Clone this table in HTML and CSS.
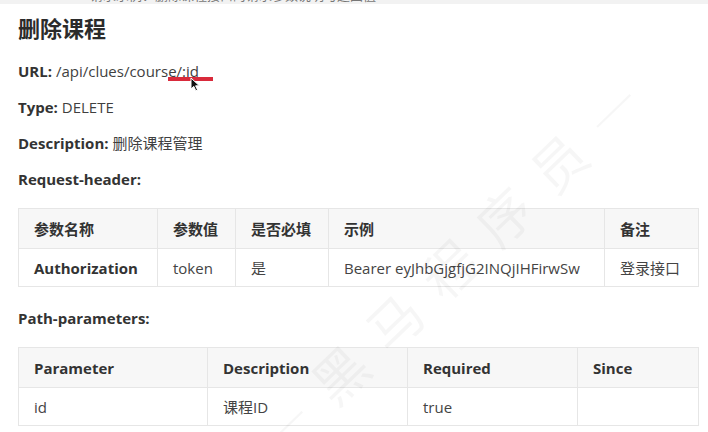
FILE: index.html
```html
<!DOCTYPE html>
<html lang="zh-CN">
<head>
<meta charset="utf-8">
<title>删除课程</title>
<link rel="stylesheet" href="styles.css">
</head>
<body>
<div class="topcut"><div class="topcut-text">请求示例：删除课程接口的请求参数说明与返回值</div></div>
<main class="page">
  <h1 class="title">删除课程</h1>
  <p class="field"><b>URL:</b> /api/clues/cours<span class="mark">e/:id<span class="redline"></span><svg class="cursor" width="11" height="15" viewBox="0 0 11 15"><path d="M1 1 L1 12 L3.8 9.4 L5.8 13.8 L7.6 13 L5.6 8.8 L9.4 8.8 Z" fill="#111" stroke="#fff" stroke-width="1"/></svg></span></p>
  <p class="field"><b>Type:</b> DELETE</p>
  <p class="field"><b>Description:</b> 删除课程管理</p>
  <p class="field"><b>Request-header:</b></p>
  <table class="grid grid-header">
    <colgroup>
      <col style="width:139px"><col style="width:78px"><col style="width:93px"><col style="width:276px"><col style="width:94px">
    </colgroup>
    <thead>
      <tr><th>参数名称</th><th>参数值</th><th>是否必填</th><th>示例</th><th>备注</th></tr>
    </thead>
    <tbody>
      <tr><td class="strong">Authorization</td><td>token</td><td>是</td><td>Bearer eyJhbGjgfjG2INQjIHFirwSw</td><td>登录接口</td></tr>
    </tbody>
  </table>
  <p class="field field-path"><b>Path-parameters:</b></p>
  <table class="grid grid-path">
    <colgroup>
      <col style="width:189px"><col style="width:200px"><col style="width:170px"><col style="width:121px">
    </colgroup>
    <thead>
      <tr><th>Parameter</th><th>Description</th><th>Required</th><th>Since</th></tr>
    </thead>
    <tbody>
      <tr><td>id</td><td>课程ID</td><td>true</td><td></td></tr>
    </tbody>
  </table>
</main>
<div class="watermark" aria-hidden="true">—黑马程序员—</div>
</body>
</html>
```
FILE: styles.css
```css
html, body {
  margin: 0;
  padding: 0;
  background: #ffffff;
  overflow: hidden;
}
body {
  font-family: "Open Sans", "Noto Sans CJK SC", sans-serif;
  font-size: 15px;
  color: #333333;
  width: 708px;
  height: 432px;
  position: relative;
}
.topcut {
  height: 4px;
  overflow: hidden;
  background: #f2f2f2;
}
.topcut-text {
  margin-top: -13px;
  padding-left: 90px;
  font-size: 13px;
  line-height: 16px;
  color: #777;
}
.page {
  padding: 0 10px 0 18px;
}
.title {
  margin: 8px 0 19px;
  font-size: 22px;
  line-height: 30px;
  font-weight: 700;
  color: #2b2b2b;
  font-family: "Noto Sans CJK SC", sans-serif;
}
.field {
  margin: 0 0 16px;
  line-height: 20px;
  color: #3f3f3f;
}
.field b {
  font-weight: 700;
  color: #333;
}
.mark {
  position: relative;
}
.redline {
  position: absolute;
  left: 0;
  top: 16px;
  width: 45px;
  height: 4px;
  background: #d92a3b;
}
.cursor {
  position: absolute;
  left: 22px;
  top: 16px;
}
.grid {
  border-collapse: collapse;
  table-layout: fixed;
  width: 680px;
  margin: 19px 0 0;
}
.grid th, .grid td {
  border: 1px solid #e6e6e6;
  text-align: left;
  padding: 0 15px;
  line-height: 20px;
  white-space: nowrap;
  overflow: hidden;
}
.grid th {
  background: #f7f7f7;
  font-weight: 700;
  color: #333;
  height: 39px;
}
.grid td {
  color: #444;
  height: 37px;
}
.grid td.strong {
  font-weight: 700;
  color: #333;
}
.field-path {
  margin-top: 21px;
}
.watermark {
  position: absolute;
  left: 200px;
  top: 255px;
  width: 460px;
  text-align: center;
  transform: rotate(-44deg);
  font-family: "Noto Sans CJK SC", sans-serif;
  font-size: 54px;
  letter-spacing: 22px;
  line-height: 60px;
  color: rgba(0, 0, 0, 0.035);
  pointer-events: none;
  white-space: nowrap;
}
```
